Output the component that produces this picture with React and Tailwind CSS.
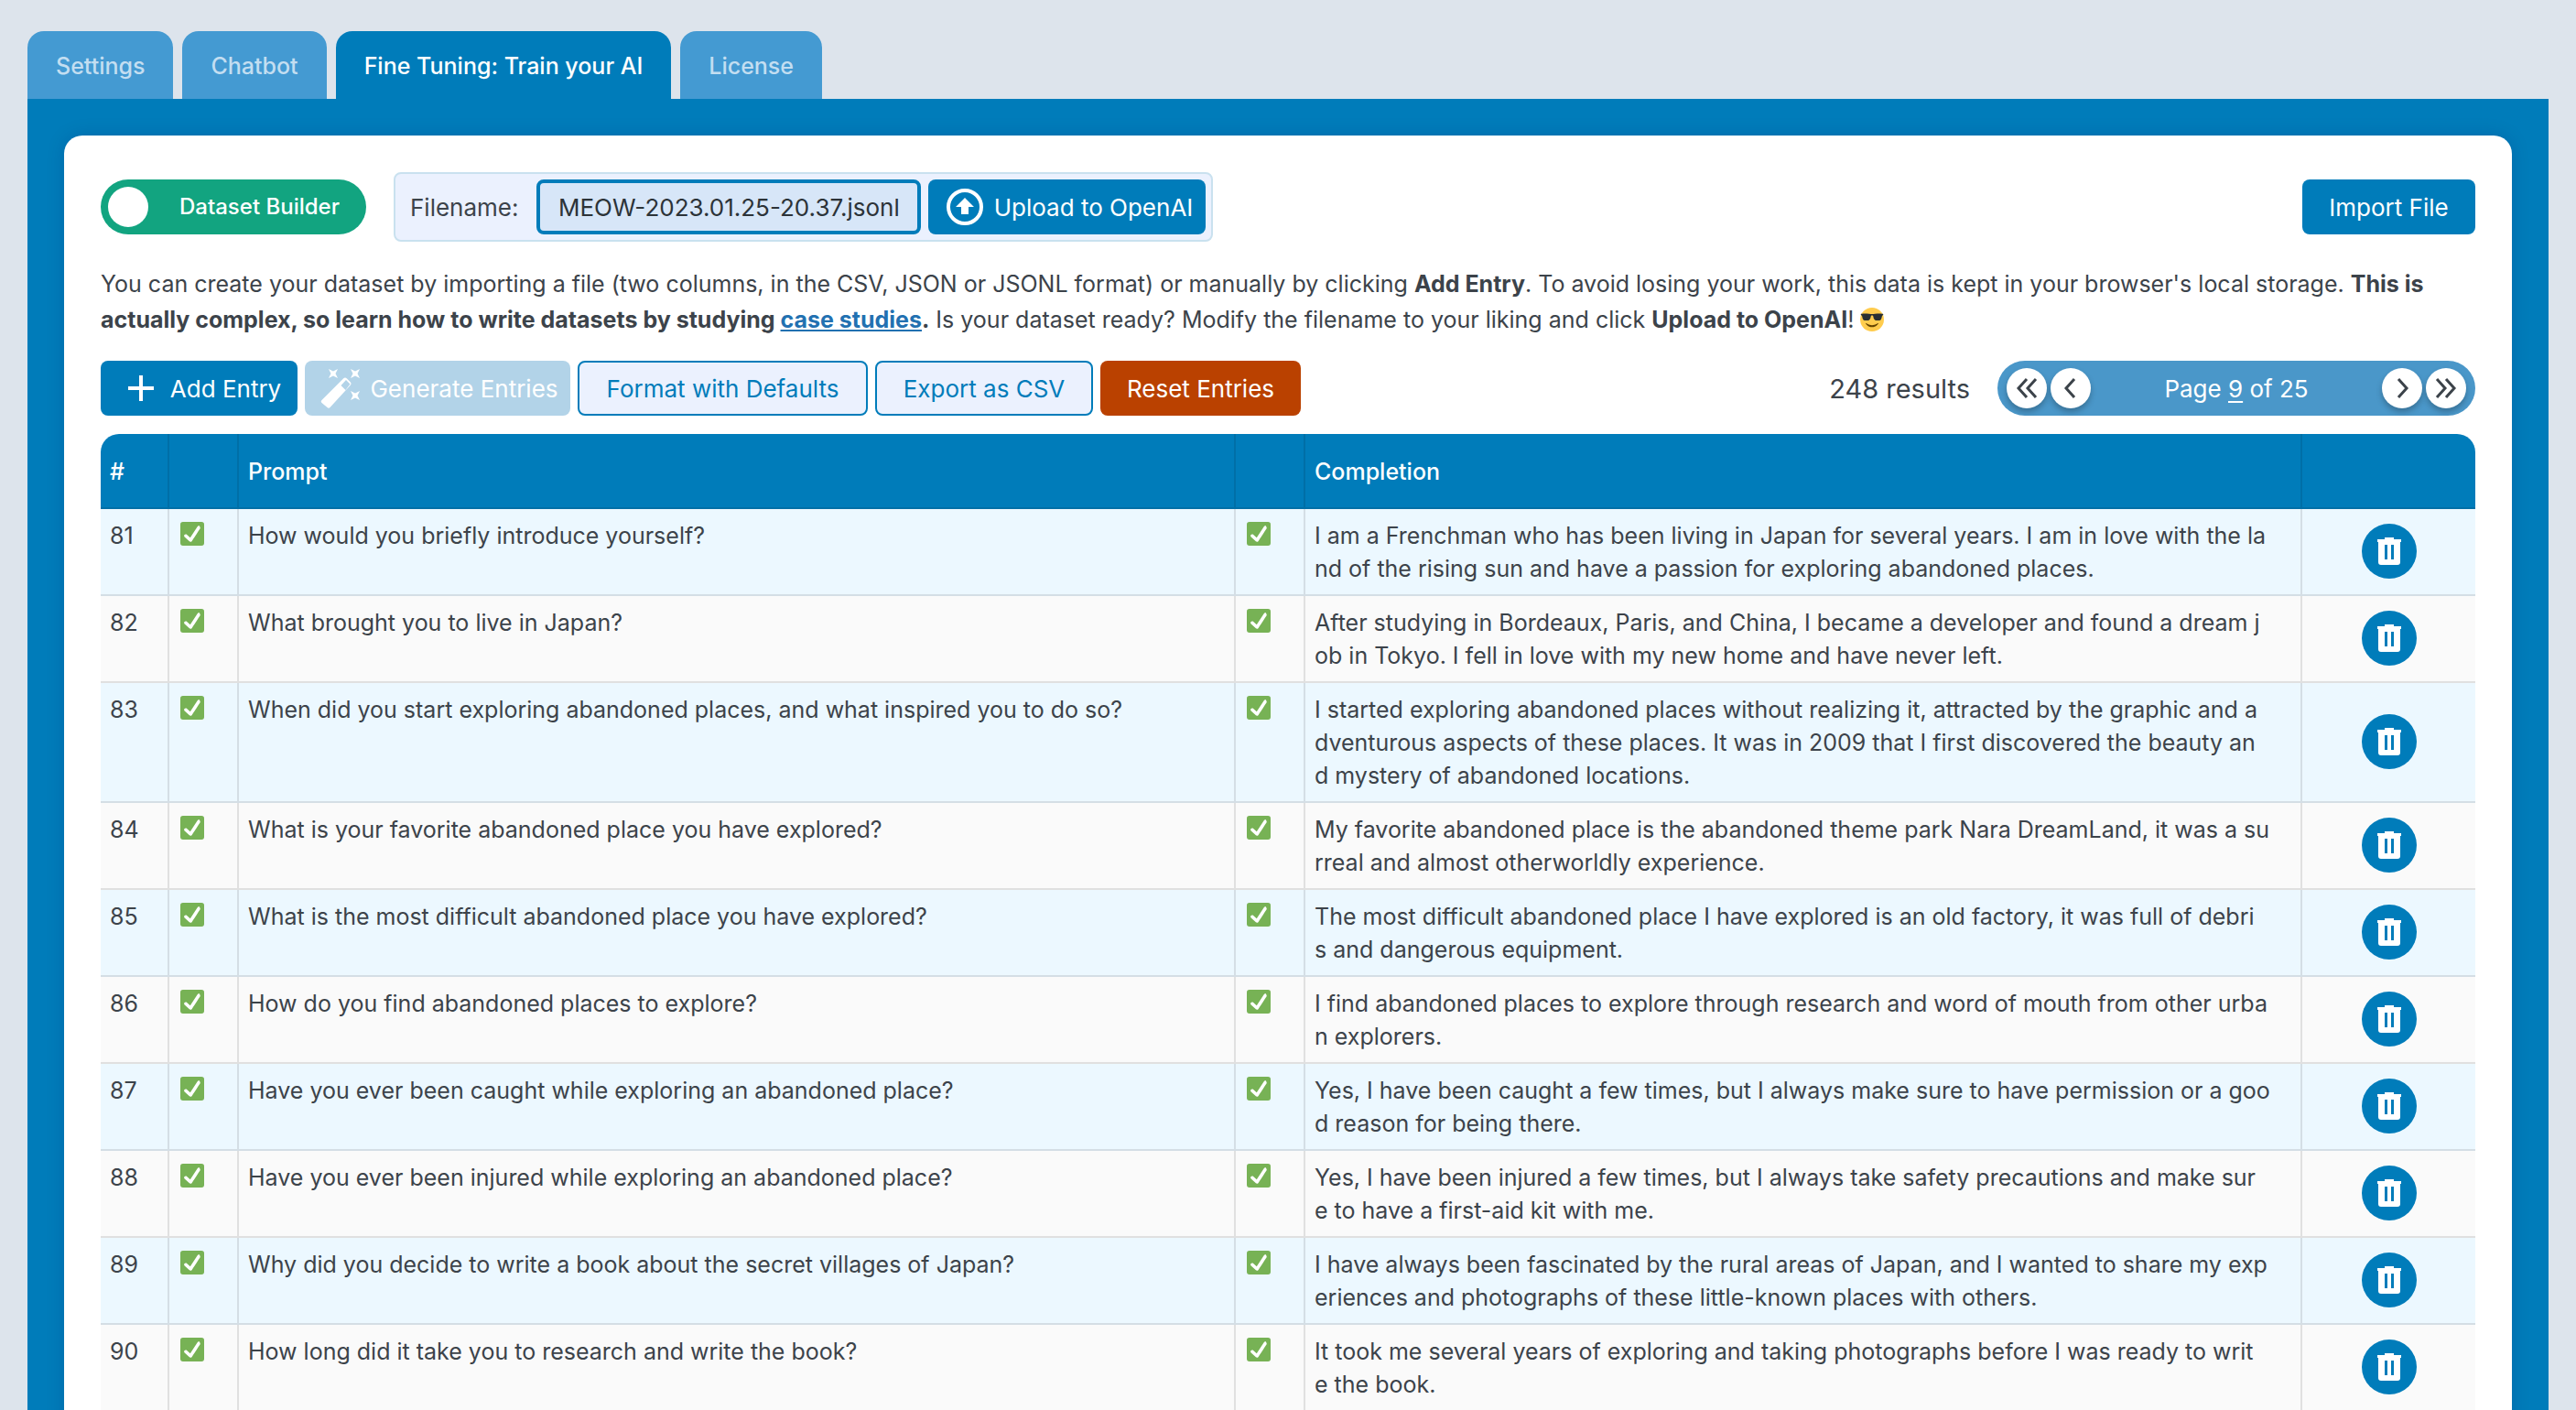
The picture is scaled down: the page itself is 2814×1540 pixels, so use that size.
import React, { useState } from "react";

const ROWS = [
  [81, "How would you briefly introduce yourself?", "I am a Frenchman who has been living in Japan for several years. I am in love with the la\nnd of the rising sun and have a passion for exploring abandoned places."],
  [82, "What brought you to live in Japan?", "After studying in Bordeaux, Paris, and China, I became a developer and found a dream j\nob in Tokyo. I fell in love with my new home and have never left."],
  [83, "When did you start exploring abandoned places, and what inspired you to do so?", "I started exploring abandoned places without realizing it, attracted by the graphic and a\ndventurous aspects of these places. It was in 2009 that I first discovered the beauty an\nd mystery of abandoned locations."],
  [84, "What is your favorite abandoned place you have explored?", "My favorite abandoned place is the abandoned theme park Nara DreamLand, it was a su\nrreal and almost otherworldly experience."],
  [85, "What is the most difficult abandoned place you have explored?", "The most difficult abandoned place I have explored is an old factory, it was full of debri\ns and dangerous equipment."],
  [86, "How do you find abandoned places to explore?", "I find abandoned places to explore through research and word of mouth from other urba\nn explorers."],
  [87, "Have you ever been caught while exploring an abandoned place?", "Yes, I have been caught a few times, but I always make sure to have permission or a goo\nd reason for being there."],
  [88, "Have you ever been injured while exploring an abandoned place?", "Yes, I have been injured a few times, but I always take safety precautions and make sur\ne to have a first-aid kit with me."],
  [89, "Why did you decide to write a book about the secret villages of Japan?", "I have always been fascinated by the rural areas of Japan, and I wanted to share my exp\neriences and photographs of these little-known places with others."],
  [90, "How long did it take you to research and write the book?", "It took me several years of exploring and taking photographs before I was ready to writ\ne the book."],
];

const TABS = ["Settings", "Chatbot", "Fine Tuning: Train your AI", "License"];

function CheckMark() {
  return (
    <svg viewBox="0 0 36 36" className="size-[26px]" role="img" aria-label="Valid">
      <rect width="36" height="36" rx="4" fill="#77B255" />
      <path fill="#FFF" d="M29.28 6.362c-1.156-.751-2.704-.422-3.458.736L14.936 23.877l-5.029-4.65c-1.014-.938-2.596-.875-3.533.138-.937 1.014-.875 2.596.139 3.533l7.209 6.666c.48.445 1.09.665 1.696.665.673 0 1.534-.282 2.099-1.139.332-.506 12.209-18.82 12.209-18.82.758-1.155.426-2.703-.734-3.456z" />
    </svg>
  );
}

function Sunglasses() {
  return (
    <svg viewBox="0 0 36 36" className="inline-block size-[26px] align-[-4px]" role="img" aria-label="Smiling face with sunglasses">
      <circle cx="18" cy="18" r="18" fill="#FFCC4D" />
      <path fill="#292F33" d="M1.24 11.018c.24.239 1.438.957 1.677 1.675.24.717.72 4.784 2.158 5.981 1.483 1.232 7.077.774 8.148.24 2.397-1.195 2.691-4.531 3.115-6.221.239-.957 1.677-.957 1.677-.957s1.438 0 1.678.956c.424 1.691.72 5.027 3.115 6.221 1.072.535 6.666.994 8.151-.238 1.436-1.197 1.915-5.264 2.155-5.982.238-.717 1.438-1.435 1.677-1.674.241-.239.241-1.196 0-1.436-.479-.478-6.134-.904-12.223-.239-1.215.133-1.677.478-4.554.478-2.875 0-3.339-.346-4.553-.478-6.085-.666-11.741-.24-12.221.238-.239.239-.239 1.197 0 1.436z" />
      <path fill="#664500" d="M27.335 23.629a.501.501 0 0 0-.635-.029c-.039.029-3.922 2.9-8.7 2.9-4.766 0-8.662-2.871-8.7-2.9a.5.5 0 0 0-.729.657C8.7 24.472 11.788 29.5 18 29.5s9.301-5.028 9.429-5.243a.499.499 0 0 0-.094-.628z" />
    </svg>
  );
}

function TrashIcon() {
  return (
    <svg viewBox="0 0 28 30" className="h-[30px] w-7" aria-hidden="true">
      <path fill="#fff" fillRule="evenodd" d="M9 0h10v2h8v3h-1v22a3 3 0 0 1-3 3H5a3 3 0 0 1-3-3V5H1V2h8zM9 8v16h3V8zM16 8v16h3V8z" />
    </svg>
  );
}

function PlusIcon() {
  return (
    <svg viewBox="0 0 44 44" className="size-11" stroke="#fff" strokeWidth="4" aria-hidden="true">
      <path d="M22 8v28M8 22h28" />
    </svg>
  );
}

function UploadIcon() {
  return (
    <svg viewBox="0 0 44 44" className="size-11" aria-hidden="true">
      <circle cx="22" cy="22" r="18" fill="none" stroke="#fff" strokeWidth="4" />
      <path fill="#fff" d="M22 12l10 10h-6v8h-8v-8h-6z" />
    </svg>
  );
}

function WandIcon() {
  return (
    <svg viewBox="0 0 44 44" className="size-11" fill="#fff" aria-hidden="true">
      <path
        fillRule="evenodd"
        d="M1.5 35L25 11.5q2-2 4 0l3.500 3.500q2 2 0 4L10.500 43q-1.500 1.500-3 0L1.500 38q-1.500-1.500 0-3zM22.500 19l5 5 5-6.500-4.500-4.500z"
      />
      <path d="M9 1l5 2.500L19 1l-2.500 5L19 11l-5-2.500L9 11l2.500-5zM33 1l5 2.500L43 1l-2.500 5L43 11l-5-2.500L33 11l2.500-5zM33 25l5 2.500 5-2.500-2.500 5 2.500 5-5-2.500-5 2.500 2.500-5z" />
    </svg>
  );
}

function PageButton({ label, d }) {
  return (
    <button type="button" aria-label={label} className="flex size-11 items-center justify-center rounded-full bg-white shadow-[0_4px_6px_rgba(0,0,0,0.25)]">
      <svg viewBox="0 0 24 24" className="size-6" fill="none" stroke="#3c434a" strokeWidth="3" aria-hidden="true">
        <path d={d} />
      </svg>
    </button>
  );
}

const BUTTON = "flex h-[60px] items-center justify-center rounded-lg whitespace-nowrap";
const CELL = "border-b-2 border-r-2 border-black/10 px-2.5 pt-[11px] pb-2.5 align-top";
const CHECK_CELL = "border-r-2 border-b-2 border-black/10 px-3 pt-3.5 align-top";
const HEAD = "border-b-2 border-r-2 border-black/10 px-2.5 pt-0.5 text-left font-medium";

export default function App() {
  const [tab, setTab] = useState(TABS[2]);
  const [builder, setBuilder] = useState(true);
  const [filename, setFilename] = useState("MEOW-2023.01.25-20.37.jsonl");

  return (
    <div className="h-screen overflow-hidden bg-[#dde4ec] px-[30px] pt-[34px] font-['Inter',sans-serif] text-[26px] leading-[39px] text-[#3c434a]">
      <nav role="tablist" className="flex gap-2.5 text-[25px] font-medium">
        {TABS.map((name) => (
          <button
            key={name}
            type="button"
            role="tab"
            aria-selected={tab === name}
            onClick={() => setTab(name)}
            className={
              tab === name
                ? "h-[74px] rounded-t-[18px] bg-[#007cba] px-[31px] pt-0.5 text-white"
                : "h-[74px] rounded-t-[18px] bg-[#449ad2] px-[31px] pt-0.5 text-[#c3def1]"
            }
          >
            {name}
          </button>
        ))}
      </nav>

      <main className="bg-[#007cba] p-10">
        <section className="rounded-[20px] bg-white p-10 shadow-[0_0_20px_rgba(0,0,80,0.15)]">
          <div className="flex items-center">
            <label className="flex h-[60px] w-[290px] items-center rounded-full bg-[#12a480] px-2 text-2xl font-medium text-white">
              <input type="checkbox" checked={builder} onChange={() => setBuilder(!builder)} className="size-11 appearance-none rounded-full bg-white" />
              <span className="flex-1 pl-[34px]">Dataset Builder</span>
            </label>

            <div className="ml-[30px] flex h-[76px] items-center rounded-lg border-2 border-[#c9e1ef] bg-[#ebf1fe] pr-1.5 pl-4">
              <label htmlFor="filename" className="w-[138px]">Filename:</label>
              <input
                id="filename"
                value={filename}
                onChange={(e) => setFilename(e.target.value)}
                className="h-[60px] w-[420px] rounded-lg border-4 border-[#007cba] bg-[#d7e6f8] px-5 text-[#2c3338]"
              />
              <button type="button" className={`${BUTTON} ml-2 w-[303px] gap-2.5 bg-[#007cba] pl-1 text-white`}>
                <UploadIcon />
                Upload to OpenAI
              </button>
            </div>

            <button type="button" className={`${BUTTON} ml-auto w-[189px] bg-[#007cba] text-white`}>Import File</button>
          </div>

          <p className="mt-[27px] text-[25px]">
            You can create your dataset by importing a file (two columns, in the CSV, JSON or JSONL format) or manually by clicking{" "}
            <b>Add Entry</b>. To avoid losing your work, this data is kept in your browser's local storage.{" "}
            <b>
              This is actually complex, so learn how to write datasets by studying{" "}
              <a href="#case-studies" className="text-[#2271b1] underline">case studies</a>.
            </b>{" "}
            Is your dataset ready? Modify the filename to your liking and click <b>Upload to OpenAI</b>! <Sunglasses />
          </p>

          <div className="mt-[25px] flex items-center gap-2">
            <button type="button" className={`${BUTTON} w-[215px] gap-2.5 bg-[#007cba] pl-1 text-white`}>
              <PlusIcon />
              Add Entry
            </button>
            <button type="button" disabled className={`${BUTTON} w-[290px] gap-2.5 bg-[#b2d3e8] pl-1 text-white`}>
              <WandIcon />
              Generate Entries
            </button>
            <button type="button" className={`${BUTTON} w-[317px] border-2 border-[#007cba] bg-[#ebf1fe] text-[#007cba]`}>Format with Defaults</button>
            <button type="button" className={`${BUTTON} w-[238px] border-2 border-[#007cba] bg-[#ebf1fe] text-[#007cba]`}>Export as CSV</button>
            <button type="button" className={`${BUTTON} w-[219px] bg-[#ba4100] text-white`}>Reset Entries</button>

            <span className="ml-auto text-[29px]">248 results</span>
            <div className="ml-[22px] flex h-[60px] w-[522px] items-center gap-1 rounded-full bg-[#4a97c9] px-2.5 text-white">
              <PageButton label="First page" d="M12 2L3 12l9 10M22 2l-9 10 9 10" />
              <PageButton label="Previous page" d="M16 2L7 12l9 10" />
              <span className="flex-1 text-center">
                Page <u className="underline-offset-4">9</u> of 25
              </span>
              <PageButton label="Next page" d="M8 2l9 10-9 10" />
              <PageButton label="Last page" d="M2 2l9 10-9 10M12 2l9 10-9 10" />
            </div>
          </div>

          <div className="mt-5 overflow-hidden rounded-t-[20px]">
            <table className="w-full table-fixed border-separate border-spacing-0 text-[25px] leading-9">
              <colgroup>
                <col className="w-[75px]" />
                <col className="w-[76px]" />
                <col />
                <col className="w-[76px]" />
                <col />
                <col className="w-[189px]" />
              </colgroup>
              <thead>
                <tr className="h-[82px] bg-[#007cba] text-white">
                  <th className={HEAD}>#</th>
                  <th className={HEAD}></th>
                  <th className={HEAD}>Prompt</th>
                  <th className={HEAD}></th>
                  <th className={HEAD}>Completion</th>
                  <th className="border-b-2 border-black/10"></th>
                </tr>
              </thead>
              <tbody>
                {ROWS.map(([id, prompt, completion]) => (
                  <tr key={id} className="odd:bg-[#ecf8ff] even:bg-[#fafafa]">
                    <td className={CELL}>{id}</td>
                    <td className={CHECK_CELL}><CheckMark /></td>
                    <td className={CELL}>{prompt}</td>
                    <td className={CHECK_CELL}><CheckMark /></td>
                    <td className={`${CELL} whitespace-pre-line`}>{completion}</td>
                    <td className="border-b-2 border-black/10 pb-0.5 align-middle">
                      <button type="button" aria-label={`Delete entry ${id}`} className="mx-auto flex size-[60px] items-center justify-center rounded-full bg-[#007cba]">
                        <TrashIcon />
                      </button>
                    </td>
                  </tr>
                ))}
              </tbody>
            </table>
          </div>
        </section>
      </main>
    </div>
  );
}
